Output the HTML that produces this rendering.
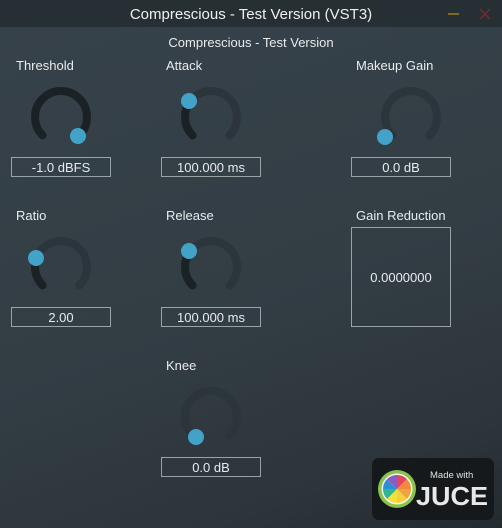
<!DOCTYPE html>
<html><head><meta charset="utf-8"><style>
html,body{margin:0;padding:0}
body{width:502px;height:528px;position:relative;overflow:hidden;font-family:"Liberation Sans","DejaVu Sans",sans-serif;color:#e8ecee;
background:linear-gradient(160deg,#36424a 0%,#333d44 55%,#2c353b 85%,#242b30 100%);}
.tb{position:absolute;left:0;top:0;width:502px;height:27px;background:#262f34;text-align:center;font-size:15px;line-height:30px;color:#eef0f1}
.t{position:absolute;font-size:13px;white-space:nowrap}
.box{position:absolute;width:98px;height:18px;border:1px solid #9aa2a6;font-size:13px;text-align:center;line-height:19px;box-sizing:content-box}
svg{position:absolute;left:0;top:0}
</style></head><body>
<div class="tb">Comprescious - Test Version (VST3)</div>
<div style="position:absolute;left:448px;top:13px;width:11px;height:2px;background:#7d6b25"></div>
<svg width="502" height="30" style="z-index:2"><path d="M480 9 L490 19 M490 9 L480 19" stroke="#6e2a30" stroke-width="1.6"/></svg>
<div class="t" style="left:0;width:502px;text-align:center;top:35px">Comprescious - Test Version</div>
<div class="t" style="left:16px;top:58px">Threshold</div>
<div class="t" style="left:166px;top:58px">Attack</div>
<div class="t" style="left:356px;top:58px">Makeup Gain</div>
<div class="t" style="left:16px;top:208px">Ratio</div>
<div class="t" style="left:166px;top:208px">Release</div>
<div class="t" style="left:356px;top:208px">Gain Reduction</div>
<div class="t" style="left:166px;top:358px">Knee</div>
<div class="box" style="left:11px;top:157px">-1.0 dBFS</div>
<div class="box" style="left:161px;top:157px">100.000 ms</div>
<div class="box" style="left:351px;top:157px">0.0 dB</div>
<div class="box" style="left:11px;top:307px">2.00</div>
<div class="box" style="left:161px;top:307px">100.000 ms</div>
<div class="box" style="left:161px;top:457px">0.0 dB</div>
<div class="box" style="left:351px;top:227px;height:98px;line-height:100px">0.0000000</div>
<svg width="502" height="528" fill="none" stroke-linecap="round">
<g stroke-width="8">
<path d="M42.6 135.4 A26 26 0 1 1 79.4 135.4" stroke="#1b2226"/>
<path d="M192.6 135.4 A26 26 0 1 1 229.4 135.4" stroke="#2b353b"/>
<path d="M192.6 135.4 A26 26 0 0 1 190 101.7" stroke="#1b2226"/>
<path d="M392.6 135.4 A26 26 0 1 1 429.4 135.4" stroke="#2b353b"/>
<path d="M42.6 285.4 A26 26 0 1 1 79.4 285.4" stroke="#2b353b"/>
<path d="M42.6 285.4 A26 26 0 0 1 36.6 258.1" stroke="#1b2226"/>
<path d="M192.6 285.4 A26 26 0 1 1 229.4 285.4" stroke="#2b353b"/>
<path d="M192.6 285.4 A26 26 0 0 1 190 251.7" stroke="#1b2226"/>
<path d="M192.6 435.4 A26 26 0 1 1 229.4 435.4" stroke="#2b353b"/>
</g>
<g fill="#42a2c8">
<circle cx="78" cy="136" r="8"/>
<circle cx="189" cy="101" r="8"/>
<circle cx="385" cy="137" r="8"/>
<circle cx="36" cy="258" r="8"/>
<circle cx="189" cy="251" r="8"/>
<circle cx="196" cy="437" r="8"/>
</g>
<rect x="372" y="458" width="122" height="62" rx="7" fill="#16191b"/>
<circle cx="397" cy="489" r="19" fill="#8bc34a"/>
<circle cx="397" cy="489" r="15.5" fill="#f4f4f4"/>
<g stroke="none">
<path d="M397 489 L397 475 A14 14 0 0 1 406.9 479.1Z" fill="#e5455a"/>
<path d="M397 489 L406.9 479.1 A14 14 0 0 1 411 489Z" fill="#f08a3c"/>
<path d="M397 489 L411 489 A14 14 0 0 1 406.9 498.9Z" fill="#f0a43c"/>
<path d="M397 489 L406.9 498.9 A14 14 0 0 1 397 503Z" fill="#f5d23a"/>
<path d="M397 489 L397 503 A14 14 0 0 1 387.1 498.9Z" fill="#f2e03c"/>
<path d="M397 489 L387.1 498.9 A14 14 0 0 1 383 489Z" fill="#2fb58f"/>
<path d="M397 489 L383 489 A14 14 0 0 1 387.1 479.1Z" fill="#2b8fd6"/>
<path d="M397 489 L387.1 479.1 A14 14 0 0 1 397 475Z" fill="#8a5bc0"/>
</g>
<text x="430" y="478" font-size="9.5" fill="#e0e0e0" stroke="none" font-family="Liberation Sans,sans-serif">Made with</text>
<text x="416" y="505" font-size="26" font-weight="bold" fill="#e8e8e8" stroke="none" font-family="Liberation Sans,sans-serif" textLength="72" lengthAdjust="spacingAndGlyphs">JUCE</text>
</svg>
</body></html>
